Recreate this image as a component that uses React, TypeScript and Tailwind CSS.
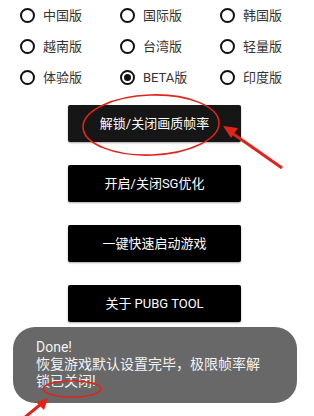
import React from "react";

const font = { fontFamily: 'Roboto, "Noto Sans CJK SC", sans-serif' };

const options = [
  ["中国版", false],
  ["国际版", false],
  ["韩国版", false],
  ["越南版", false],
  ["台湾版", false],
  ["轻量版", false],
  ["体验版", false],
  ["BETA版", true],
  ["印度版", false],
] as const;

const buttons = ["解锁/关闭画质帧率", "开启/关闭SG优化", "一键快速启动游戏", "关于 PUBG TOOL"];

function Radio({ label, checked }: { label: string; checked: boolean }) {
  return (
    <div className="flex items-center h-[31px]">
      <div className="w-[15px] h-[15px] rounded-full border-[2px] border-[#111] flex items-center justify-center shrink-0">
        {checked && <div className="w-[7px] h-[7px] rounded-full bg-[#111]" />}
      </div>
      <span className="ml-[8px] text-[13px] text-[#333] leading-none">{label}</span>
    </div>
  );
}

export default function App() {
  return (
    <div className="relative w-[314px] h-[416px] bg-white overflow-hidden" style={font}>
      <div className="grid grid-cols-[100px_100px_100px] pl-[20px]">
        {options.map(([l, c]) => (
          <Radio key={l} label={l} checked={c} />
        ))}
      </div>
      <div className="flex flex-col gap-[23px] pl-[68px] mt-[12px]">
        {buttons.map((b, i) => (
          <div
            key={b}
            className={`w-[173px] h-[37px] rounded-[2px] flex items-center justify-center text-white text-[13px] shadow-[0_1px_2px_rgba(0,0,0,0.35)] ${
              i === 0 ? "bg-[#161616]" : "bg-black"
            }`}
          >
            {b}
          </div>
        ))}
      </div>

      <div className="absolute left-[13px] top-[327px] w-[284px] h-[76px] rounded-[22px] bg-[#686868] pl-[23px] pt-[12px] text-[#f2f2f2] text-[14px] leading-[17px]">
        <div>Done!</div>
        <div>恢复游戏默认设置完毕，极限帧率解</div>
        <div>锁已关闭!</div>
      </div>

      <svg className="absolute inset-0 pointer-events-none" width="314" height="416" viewBox="0 0 314 416">
        <ellipse cx="151" cy="125" rx="68" ry="30" fill="none" stroke="#e2231a" strokeWidth="1.6" transform="rotate(-2 151 125)" />
        <line x1="282" y1="168" x2="232" y2="133" stroke="#e2231a" strokeWidth="3" />
        <polygon points="223,126 238,128 231,138" fill="#e2231a" />
        <ellipse cx="72" cy="389" rx="29" ry="8" fill="none" stroke="#e2231a" strokeWidth="1.6" />
        <line x1="24" y1="418" x2="41" y2="404" stroke="#e2231a" strokeWidth="3" />
        <polygon points="48,398 44,410 36,402" fill="#e2231a" />
      </svg>
    </div>
  );
}
